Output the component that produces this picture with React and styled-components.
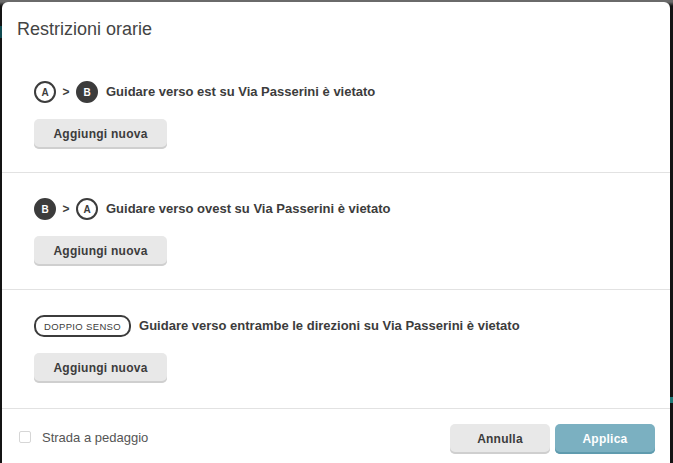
import React from "react";
import styled, { createGlobalStyle } from "styled-components";

const GlobalStyle = createGlobalStyle`
  html, body {
    margin: 0;
    height: 100%;
    overflow: hidden;
    background: #141414;
    font-family: "Liberation Sans", Arial, sans-serif;
  }
`;

const Backdrop = styled.div`
  height: 463px;
  padding: 2px 3px 0 2px;
  box-sizing: border-box;
  background:
    linear-gradient(#1f7a78, #1f7a78) right 0 top 397px / 3px 6px no-repeat,
    linear-gradient(#0f4a50, #0f4a50) left 0 top 26px / 2px 12px no-repeat,
    linear-gradient(#6a6a6a 0, #6a6a6a 2px, #141414 6px);
`;

const Modal = styled.div`
  height: 480px;
  background: #fff;
  border-radius: 6px 6px 0 0;
  color: #3c3c3c;
`;

const Title = styled.h2`
  margin: 0;
  height: 54px;
  padding: 16px 15px 0;
  box-sizing: border-box;
  font-size: 18px;
  font-weight: 400;
  line-height: 22px;
  color: #444;
`;

const Section = styled.section`
  padding: 25px 32px 23px;
  border-bottom: 1px solid #e2e2e2;
  display: flex;
  flex-direction: column;
  align-items: flex-start;
  gap: 16px;

  &:last-of-type {
    padding-bottom: 25px;
  }
`;

const Heading = styled.div`
  display: flex;
  align-items: center;
  height: 22px;
  font-size: 13px;
  font-weight: 700;
`;

const Badge = styled.span`
  width: 22px;
  height: 22px;
  box-sizing: border-box;
  border-radius: 50%;
  display: flex;
  align-items: center;
  justify-content: center;
  border: 2px solid #3c3c3c;
  background: ${(p) => (p.$filled ? "#3c3c3c" : "#fff")};
  color: ${(p) => (p.$filled ? "#fff" : "#3c3c3c")};
  font-size: 10px;
  font-weight: 700;
`;

const Arrow = styled.span`
  width: 20px;
  text-align: center;
  font-size: 12px;
`;

const Pill = styled.span`
  height: 22px;
  box-sizing: border-box;
  padding: 0 8px;
  border: 2px solid #3c3c3c;
  border-radius: 10px;
  display: flex;
  align-items: center;
  font-size: 9.5px;
  font-weight: 400;
  letter-spacing: 0.35px;
`;

const Text = styled.span`
  margin-left: 8px;
  padding-bottom: 2px;
`;

const Button = styled.button`
  width: ${(p) => p.$width || "133px"};
  height: 30px;
  padding: 0;
  border: 0;
  border-radius: 5px;
  font: 700 12px "Liberation Sans", Arial, sans-serif;
  letter-spacing: 0.25px;
  background: ${(p) => (p.$primary ? "#7bb0c1" : "#e8e8e8")};
  color: ${(p) => (p.$primary ? "#fff" : "#3c3c3c")};
  box-shadow: inset 0 -2px 0 ${(p) => (p.$primary ? "#5f9bae" : "#cfcfcf")};
`;

const Footer = styled.footer`
  display: flex;
  align-items: center;
  padding: 15px 15px 0 17px;
`;

const CheckLabel = styled.label`
  display: flex;
  align-items: center;
  gap: 11px;
  margin-bottom: 4px;
  font-size: 13px;
  color: #555;
`;

const Box = styled.span`
  width: 12px;
  height: 12px;
  box-sizing: border-box;
  border: 1px solid #d6d6d6;
  border-radius: 2px;
`;

const Actions = styled.div`
  margin-left: auto;
  display: flex;
  gap: 5px;
`;

const rows = [
  { from: "A", to: "B", text: "Guidare verso est su Via Passerini è vietato" },
  { from: "B", to: "A", text: "Guidare verso ovest su Via Passerini è vietato" },
  { text: "Guidare verso entrambe le direzioni su Via Passerini è vietato" },
];

const App = () => {
  return (
    <>
      <GlobalStyle />
      <Backdrop>
        <Modal>
          <Title>Restrizioni orarie</Title>
          {rows.map((row) => (
            <Section key={row.text}>
              <Heading>
                {row.from ? (
                  <>
                    <Badge $filled={row.from === "B"}>{row.from}</Badge>
                    <Arrow>&gt;</Arrow>
                    <Badge $filled={row.to === "B"}>{row.to}</Badge>
                  </>
                ) : (
                  <Pill>DOPPIO SENSO</Pill>
                )}
                <Text>{row.text}</Text>
              </Heading>
              <Button>Aggiungi nuova</Button>
            </Section>
          ))}
          <Footer>
            <CheckLabel>
              <Box />
              Strada a pedaggio
            </CheckLabel>
            <Actions>
              <Button $width="100px">Annulla</Button>
              <Button $width="100px" $primary>
                Applica
              </Button>
            </Actions>
          </Footer>
        </Modal>
      </Backdrop>
    </>
  );
};

export default App;
